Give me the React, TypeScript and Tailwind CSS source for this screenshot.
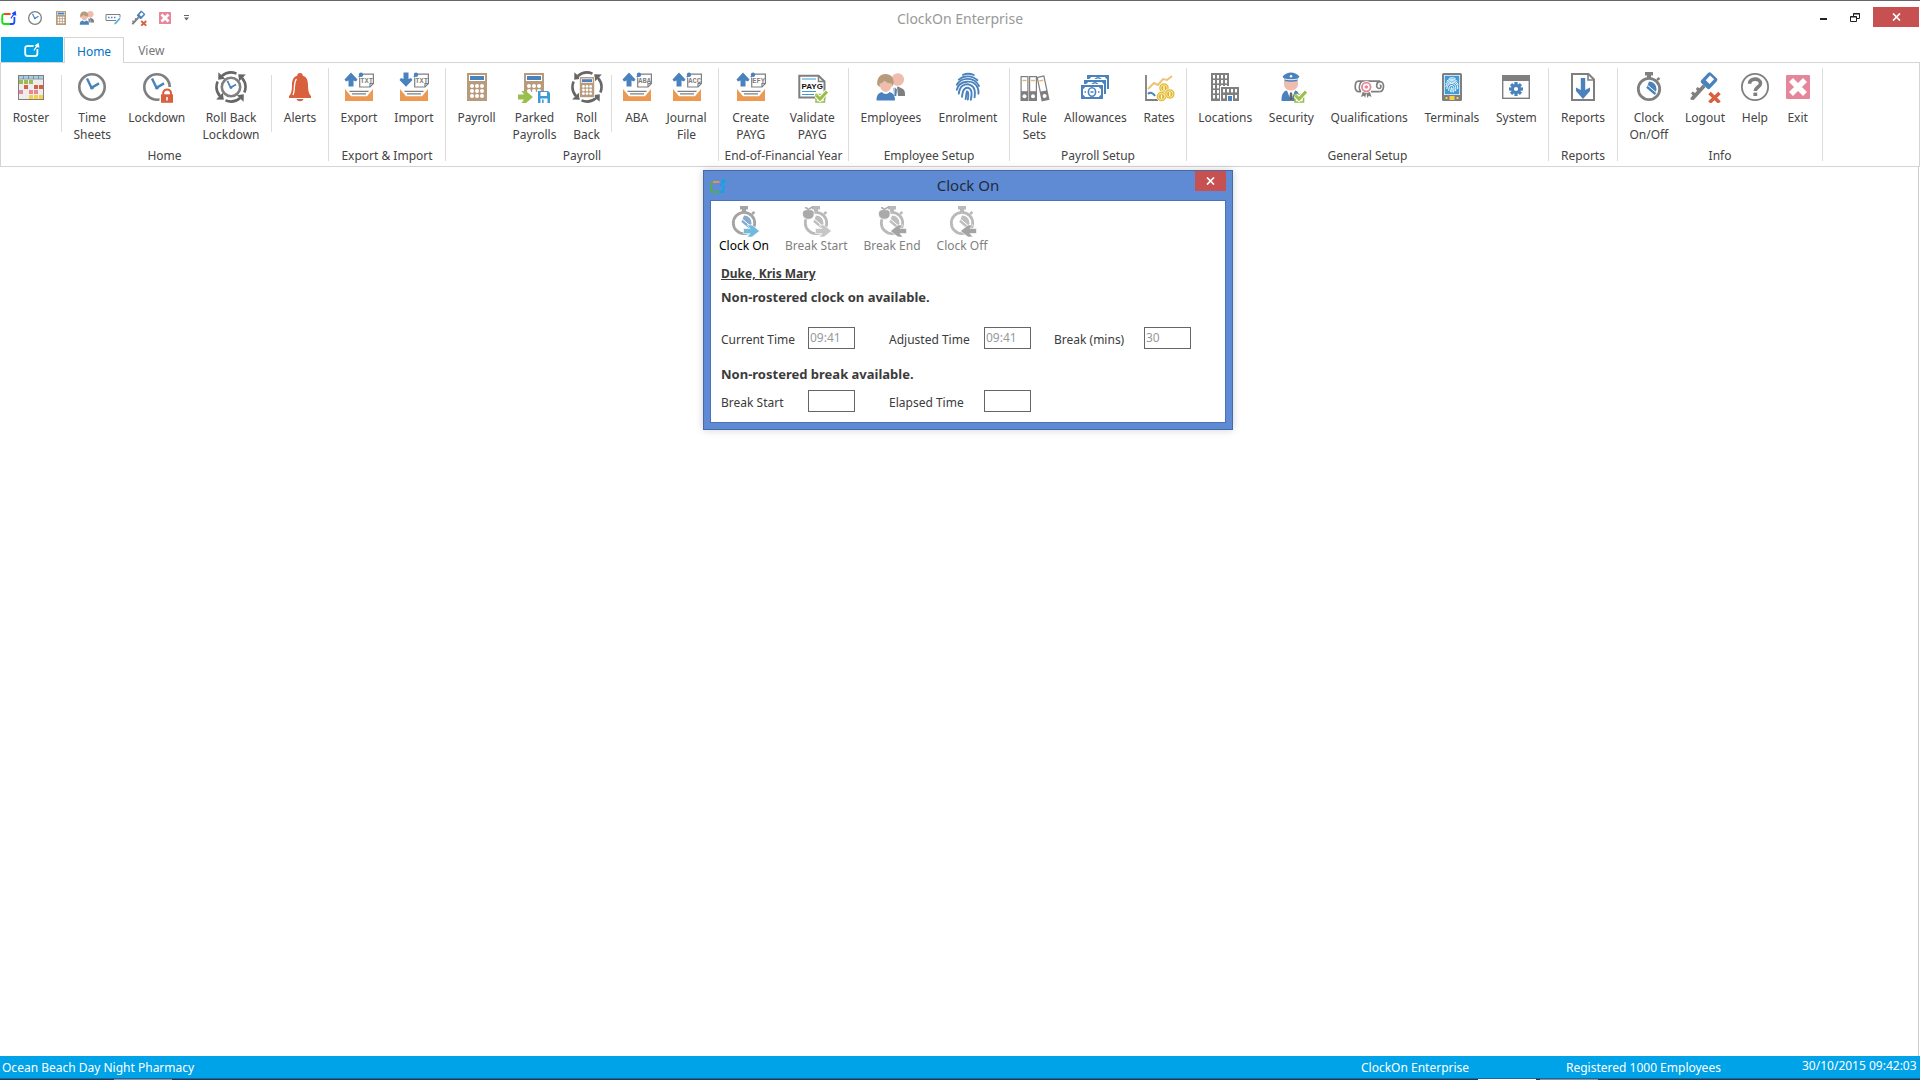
import { Fragment, useState } from "react";
import type { ReactNode } from "react";

const GRAY = "#7f7f7f";
const DARK = "#666666";
const BLUE = "#4a82bd";
const RED = "#d9603f";
const TAN = "#b89a7d";
const GREEN = "#9bbf4d";
const ORANGE = "#ec9a53";
const SKIN = "#efbdae";
const PINK = "#e6869a";

type RibbonItem = {
  label: string;
  icon: ReactNode;
  divider?: boolean;
};

type RibbonGroup = {
  title: string;
  width: string;
  items: RibbonItem[];
};

function Icon({ children, size = 32 }: { children: ReactNode; size?: number }) {
  return (
    <svg width={size} height={size} viewBox="0 0 32 32" fill="none" className="shrink-0" aria-hidden="true">
      {children}
    </svg>
  );
}

/* Shared pieces */

function ClockFace({ cx = 16, r = 12.7 }: { cx?: number; r?: number }) {
  const k = r / 12.7;
  return (
    <g transform={`translate(${cx} 16)`}>
      <circle r={r} fill="#fff" stroke={GRAY} strokeWidth={2.6} />
      <path
        d="M-5 -8.5L-0.5 0.8L7 -3.6"
        transform={`scale(${k})`}
        stroke={BLUE}
        strokeWidth={2.4}
      />
      <circle r={1.9 * k} cy={0.6} fill={BLUE} />
    </g>
  );
}

function CycleArrows() {
  return (
    <g>
      {[0, 90, 180, 270].map((deg) => (
        <g key={deg} transform={`rotate(${deg} 16 16)`}>
          <path d="M29.4 21.5A14.5 14.5 0 0 0 27 6.8" stroke={DARK} strokeWidth={2.6} />
          <path d="M23.2 3.2L30.8 3.4L24.2 10.2Z" fill={DARK} />
        </g>
      ))}
    </g>
  );
}

function CalculatorBody() {
  return (
    <g>
      <rect x="6" y="2" width="20" height="28" fill={TAN} />
      <rect x="8" y="4" width="16" height="6" fill="#fff" />
      <rect x="9" y="5" width="14" height="4" fill={BLUE} />
      {[15, 20, 25].map((y) =>
        [11, 16, 21].map((x) => <circle key={`${x}-${y}`} cx={x} cy={y} r="2" fill="#fff" />)
      )}
    </g>
  );
}

function CheckBadge() {
  return (
    <g>
      <path d="M20 23.5H28.5V31H20Z" fill="#fff" stroke={GREEN} strokeWidth="1.6" />
      <path d="M20.5 24.5L24 28L31 20.5" stroke="#fff" strokeWidth="5" />
      <path d="M20.5 24.5L24 28L31 20.5" stroke={GREEN} strokeWidth="3" />
    </g>
  );
}

function TrayIcon({ text, down = false }: { text: string; down?: boolean }) {
  return (
    <Icon>
      {down ? (
        <path d="M5.5 1.5H10.5V8L13 7L14.5 9L8 15.8L1.5 9L3 7L5.5 8Z" fill={BLUE} />
      ) : (
        <path d="M8 1.5L14.5 8.5L13 10.5L10.5 9.5V15.5H5.5V9.5L3 10.5L1.5 8.5Z" fill={BLUE} />
      )}
      <path d="M20 3.2H30.4V12.5L27 16H16.7V7" stroke={GRAY} strokeWidth="1.2" />
      <path d="M27 16V12.5H30.4" stroke={GRAY} strokeWidth="1.2" />
      <circle cx="18" cy="3.7" r="2.2" fill={BLUE} />
      <path d="M15.8 6.2L18 4" stroke={BLUE} strokeWidth="1.4" />
      <text x="23.6" y="12" textAnchor="middle" fontSize="7" fontFamily="Liberation Mono, monospace" fontWeight="700" fill={GRAY}>
        {text}
      </text>
      <path d="M2 18L8 25.2H24L30 18V30H2Z" fill={ORANGE} />
      <path d="M6.5 20.3H25.5M9 22.8H23" stroke={GRAY} strokeWidth="1.2" />
    </Icon>
  );
}

/* Ribbon icons */

function RosterIcon() {
  const cells: [number, number, string][] = [
    [4, 9, "#9bbb59"], [9, 9, "#9bbb59"], [14, 9, "#9bbb59"],
    [9, 14, RED], [19, 14, RED], [24, 14, RED],
    [4, 19, PINK], [14, 19, PINK], [19, 19, PINK],
    [14, 24, "#fbcf45"], [19, 24, "#fbcf45"], [24, 24, "#fbcf45"],
  ];
  return (
    <Icon>
      <rect x="3.5" y="4.5" width="25" height="24" fill="#ededed" stroke={GRAY} />
      <rect x="4" y="5" width="24" height="2.6" fill="#9fd0ee" />
      <path d="M3 8H29M8.5 5V8M13.5 5V8M18.5 5V8M23.5 5V8" stroke={GRAY} strokeWidth="0.8" />
      {cells.map(([x, y, color]) => (
        <rect key={`${x}-${y}`} x={x} y={y} width="4" height="4" fill={color} />
      ))}
    </Icon>
  );
}

function ClockIcon({ size }: { size?: number }) {
  return (
    <Icon size={size}>
      <ClockFace />
    </Icon>
  );
}

function LockdownIcon() {
  return (
    <Icon>
      <ClockFace />
      <path d="M18.5 32V20L23 16H32V32Z" fill="#fff" />
      <path d="M22.2 24V21.5A4 4 0 0 1 30 21.5V24" stroke={RED} strokeWidth="2" />
      <rect x="20" y="23.3" width="12" height="8.5" fill={RED} />
      <path d="M26 26V29.5" stroke="#fff" strokeWidth="1.6" />
    </Icon>
  );
}

function RollBackLockdownIcon() {
  return (
    <Icon>
      <CycleArrows />
      <ClockFace r={9.2} />
    </Icon>
  );
}

function BellIcon() {
  return (
    <Icon>
      <path d="M16 2C17.8 2 18.8 3 18.8 4.8C22.8 6 24 9.5 24 14C24 20 25 23 27 25V27H5V25C7 23 8 20 8 14C8 9.5 9.2 6 13.2 4.8C13.2 3 14.2 2 16 2Z" fill={RED} />
      <path d="M12.5 8C10.5 10 10.5 14 10.3 18C10.2 20 9.8 22 9 24" stroke="#fff" strokeWidth="1.3" />
      <path d="M12.5 28H19.5C19 29.6 17.6 30.2 16 30.2C14.4 30.2 13 29.6 12.5 28Z" fill={RED} />
    </Icon>
  );
}

function CalculatorIcon({ size }: { size?: number }) {
  return (
    <Icon size={size}>
      <CalculatorBody />
    </Icon>
  );
}

function ParkedPayrollsIcon() {
  return (
    <Icon>
      <CalculatorBody />
      <rect x="5" y="21" width="23" height="11" fill="#fff" />
      <path d="M0 23.5H6L3.5 20H8L15 26L8 32H3.5L6 28.5H0Z" fill={GREEN} />
      <path d="M20 20H30L32 22V32H20Z" fill="#3d9bd6" />
      <rect x="22.5" y="21" width="6.5" height="4" fill="#fff" />
      <rect x="22.5" y="27.5" width="7" height="4.5" fill="#fff" />
      <rect x="24" y="28.5" width="1.6" height="3.5" fill="#3d9bd6" />
    </Icon>
  );
}

function RollBackIcon() {
  return (
    <Icon>
      <CycleArrows />
      <rect x="8" y="6" width="16" height="20.5" fill="#fff" />
      <g transform="translate(4.5 4.6) scale(0.72)">
        <CalculatorBody />
      </g>
    </Icon>
  );
}

function ValidateIcon() {
  return (
    <Icon>
      <path d="M3.3 4.7H22.5L28.5 10.5V26.5H3.3Z" fill="#fff" stroke={GRAY} strokeWidth="2" />
      <path d="M22.5 4.7V10.5H28.5" stroke={GRAY} strokeWidth="1.5" />
      <path d="M6 8H20M6 20.5H20M6 23.5H18" stroke="#3d9bd6" strokeWidth="1.1" />
      <text x="16.2" y="18" textAnchor="middle" fontSize="8" fontFamily="Liberation Sans, sans-serif" fontWeight="700" fill="#111">
        PAYG
      </text>
      <CheckBadge />
    </Icon>
  );
}

function EmployeesIcon({ size }: { size?: number }) {
  return (
    <Icon size={size}>
      <circle cx="22.8" cy="8.5" r="6.3" fill={SKIN} />
      <path d="M18.5 17L23 15.5L28 18C30 19.5 30 22 30 25H19Z" fill={GRAY} />
      <path d="M19.5 16L22 15.5L23 25H19.5Z" fill="#fff" />
      <path d="M20.3 16.5L22 18.5L21.3 25H19.6Z" fill={BLUE} />
      <path d="M4.5 12.5C4.5 9 7 7 10.5 7S17 9 17 12.5C17 17 14 21 10.8 21S4.5 17 4.5 12.5Z" fill={SKIN} />
      <path d="M2.3 14C1.5 7 5 3 10.5 3S19 6.5 18.6 13L16.8 16V12.5C13.5 12.5 11 11.5 9.5 9.5C8.5 11.3 6.5 12.3 4.8 12.5V16Z" fill={TAN} />
      <path d="M7 21C8.5 23.5 13 23.5 14.5 21C18 22 20 24 20 29.5H1.5C1.5 24 3.5 22 7 21Z" fill={BLUE} />
    </Icon>
  );
}

function Fingerprint({ color, width = 1.9 }: { color: string; width?: number }) {
  return (
    <g stroke={color} strokeWidth={width} strokeLinecap="round">
      <path d="M11 3.8C14.5 2.3 18.5 2.5 21.8 4" />
      <path d="M6.8 8.6C12 4 20.5 4.4 25.4 9.2" />
      <path d="M4.8 13.8C9.5 5.8 22.5 5.6 27 15" />
      <path d="M4.8 18.8C7 9 22 7.6 25.8 17.2C26.4 18.8 26.6 20.6 26.4 22.6" />
      <path d="M6.8 22.6C7.2 19.5 8 16.5 10.6 14.8C15.5 11.6 21.5 14 22.6 19C23.1 21.2 23 23.8 22.6 26.4" />
      <path d="M10 25.8C10.6 22.5 10.4 18.2 14 17C17 16.1 19.2 18.4 19.5 21C19.8 23.6 19.4 26.2 18.8 28.8" />
      <path d="M13.6 28C14.4 25.4 13.9 22.8 15 20.4C16.7 20.6 16.4 25 15.8 28.6" />
    </g>
  );
}

function EnrolmentIcon() {
  return (
    <Icon>
      <Fingerprint color={BLUE} />
    </Icon>
  );
}

function BindersIcon() {
  const binder = (
    <g>
      <rect width="8" height="25" fill={GRAY} />
      <rect x="1.2" y="1.2" width="5.6" height="14" fill="#fff" />
      <path d="M2 4.5H6" stroke="#e9b36b" strokeWidth="1.4" />
      <circle cx="4" cy="20.3" r="2" fill="#fff" />
    </g>
  );
  return (
    <Icon>
      <g transform="translate(2.5 5)">{binder}</g>
      <g transform="translate(11 5)">{binder}</g>
      <g transform="translate(18.5 6) rotate(-12)">{binder}</g>
    </Icon>
  );
}

function AllowancesIcon() {
  return (
    <Icon>
      {[[8, 4], [5, 9], [2, 14]].map(([x, y]) => (
        <g key={x} transform={`translate(${x} ${y})`}>
          <rect x="-1" y="-1" width="24" height="16" fill="#fff" />
          <rect width="22" height="14" fill={BLUE} />
          <path d="M4 2H18A2.5 2.5 0 0 0 20 4V10A2.5 2.5 0 0 0 18 12H4A2.5 2.5 0 0 0 2 10V4A2.5 2.5 0 0 0 4 2Z" fill="#fff" />
          <ellipse cx="11" cy="7" rx="3.6" ry="4.2" stroke={BLUE} strokeWidth="1.6" />
          <path d="M9.5 7H12.5M3.5 7H5M17 7H18.5" stroke={BLUE} strokeWidth="1.4" />
        </g>
      ))}
    </Icon>
  );
}

function RatesIcon() {
  return (
    <Icon>
      <path d="M3 4V29H15" stroke={GRAY} strokeWidth="1.8" />
      <path d="M5 18L11 12L15 14L20 8L24 9L29 5" stroke="#efc27a" strokeWidth="2" />
      <path d="M5 23C7 21 10 21.5 12 25" stroke={BLUE} strokeWidth="2" />
      {[[21, 17], [18.5, 25.5], [26.8, 23]].map(([x, y]) => (
        <g key={x}>
          <circle cx={x} cy={y} r="5" fill="#dfb327" stroke="#fff" strokeWidth="0.6" />
          <circle cx={x} cy={y} r="3.2" stroke="#fff2b4" strokeWidth="0.9" />
          <path d={`M${x} ${y - 2}V${y + 2}`} stroke="#fff" strokeWidth="1.3" />
        </g>
      ))}
    </Icon>
  );
}

function LocationsIcon() {
  return (
    <Icon>
      <rect x="2" y="2" width="18" height="28" fill={GRAY} />
      {[4, 9, 14, 19, 24].map((y) =>
        [4, 8, 12, 16].map((x) => <rect key={`${x}-${y}`} x={x} y={y} width="2" height="3.4" fill="#fff" />)
      )}
      <rect x="11" y="15" width="20" height="16" fill="#fff" />
      <rect x="12" y="16" width="18" height="14" fill={GRAY} />
      {[14, 18, 22, 26].map((x) => (
        <rect key={x} x={x} y="18" width="2" height="3.4" fill="#fff" />
      ))}
      <rect x="14" y="24" width="2" height="3.4" fill="#fff" />
      <rect x="26" y="24" width="2" height="3.4" fill="#fff" />
      <rect x="18" y="24" width="6" height="6" fill="#fff" />
      <rect x="19" y="25" width="4" height="5" fill={BLUE} />
    </Icon>
  );
}

function SecurityIcon() {
  return (
    <Icon>
      <path d="M9 10H23V13C23 17 20 19.5 16 19.5S9 17 9 13Z" fill={SKIN} />
      <path d="M7.5 5.5C10 2.8 13 1.5 16 1.5S22 2.8 24.5 5.5L22.5 8V10C18 11 14 11 9.5 10V8Z" fill={BLUE} />
      <path d="M9.5 8C14 9 18 9 22.5 8" stroke="#fff" strokeWidth="0.9" />
      <circle cx="16" cy="5.2" r="1.2" fill="#fff" />
      <path d="M11.5 19.5L16 22L20.5 19.5C23.5 20.5 24.5 23 24.5 30H6.5C6.5 23 8.5 20.5 11.5 19.5Z" fill={BLUE} />
      <path d="M12 19.5L16 30L20 19.5L16 21Z" fill="#fff" />
      <path d="M15 21.5H17L17.8 28L16 30L14.2 28Z" fill={DARK} />
      <CheckBadge />
    </Icon>
  );
}

function QualificationsIcon() {
  return (
    <Icon>
      <path d="M8 10.2H27M8 20.6H5C1.2 20.6 1.2 10.2 5.5 10.2H10M8 20.6C5.5 19 6 12.5 9 10.2M18 20.6H26.5" stroke={GRAY} strokeWidth="1.7" />
      <path d="M26.5 20.6C31.5 20.6 32 10.6 27 10.6C23 10.6 22.5 17.5 26 17.5C28.5 17.5 28.5 14 26.6 14" stroke={GRAY} strokeWidth="1.7" />
      <path d="M10 20L8 26L11 24.7L12.2 27L13.2 22L14.4 27L15.8 24.7L18.6 26L16.5 20Z" fill={GRAY} />
      <circle cx="13.3" cy="16" r="6.1" fill="#fff" />
      <circle cx="13.3" cy="16" r="4.3" stroke={PINK} strokeWidth="1.8" />
      <circle cx="13.3" cy="16" r="1.8" fill={PINK} />
    </Icon>
  );
}

function TerminalsIcon() {
  return (
    <Icon>
      <rect x="6" y="2" width="20" height="28" rx="1.5" fill={GRAY} />
      <rect x="8" y="4" width="16" height="20" fill="#fff" />
      <rect x="8.7" y="4.7" width="14.6" height="18.6" fill="#3d9bd6" />
      <g transform="translate(7.2 5.2) scale(0.55)">
        <Fingerprint color="#fff" width={1.8} />
      </g>
      <rect x="13.5" y="25" width="5" height="4" fill="#fbcf45" />
      <rect x="9.5" y="26" width="2" height="2" fill="#fbcf45" />
      <rect x="20.5" y="26" width="2" height="2" fill="#fbcf45" />
    </Icon>
  );
}

function SystemIcon() {
  return (
    <Icon>
      <rect x="2.7" y="4.7" width="26.6" height="22.6" fill="#fff" stroke={GRAY} strokeWidth="1.4" />
      <rect x="2" y="4" width="28" height="6" fill={GRAY} />
      <g transform="translate(16 18)">
        {[0, 45, 90, 135].map((deg) => (
          <rect key={deg} x="-1.6" y="-7" width="3.2" height="14" fill={BLUE} transform={`rotate(${deg})`} />
        ))}
        <circle r="5" fill={BLUE} />
        <circle r="2.1" fill="#fff" />
      </g>
    </Icon>
  );
}

function ReportsIcon() {
  return (
    <Icon>
      <path d="M5 3H21.5L27 8.5V29H5Z" fill="#fff" stroke={GRAY} strokeWidth="2" />
      <path d="M21 3V9H27" stroke={GRAY} strokeWidth="1.6" />
      <path d="M13.8 7H18.2V19L23 16.5V20L16 28L9 20V16.5L13.8 19Z" fill={BLUE} />
    </Icon>
  );
}

function Stopwatch({ ring = GRAY, hand = BLUE }: { ring?: string; hand?: string }) {
  return (
    <g>
      <path d="M12 1H20V4.5H18V7H14V4.5H12Z" fill={ring} />
      <path d="M24 9L26.5 7" stroke={ring} strokeWidth="2.4" />
      <circle cx="16" cy="18" r="10.7" fill="#fff" stroke={ring} strokeWidth="2.8" />
      <path d="M16 10.5A7.5 7.5 0 0 1 23.5 18.5L22.5 21.5L14.5 14.5Z" fill={hand} />
      <path d="M14 15.8L22.5 23" stroke={hand} strokeWidth="2.6" />
      <path d="M14.8 14.4L23 21.4" stroke="#fff" strokeWidth="1" />
    </g>
  );
}

function StopwatchIcon() {
  return (
    <Icon>
      <Stopwatch />
    </Icon>
  );
}

function KeyIcon({ size }: { size?: number }) {
  return (
    <Icon size={size}>
      <g transform="rotate(43 20 9)">
        <rect x="14.5" y="2.5" width="12" height="14" rx="2" fill={BLUE} />
        <rect x="17.8" y="5" width="5.4" height="6.5" fill="#fff" />
        <path d="M18.6 16.5H22.4V34L20 36L18.6 34.5V31.5L16 31V28.5L18.6 28V25L16.5 24.5V22L18.6 21.5Z" fill={GRAY} />
      </g>
      <path d="M20.5 22L30.5 31.5M30.5 22L20.5 31.5" stroke="#fff" strokeWidth="5.5" />
      <path d="M20.5 22L30.5 31.5M30.5 22L20.5 31.5" stroke={RED} strokeWidth="3.6" />
    </Icon>
  );
}

function HelpIcon() {
  return (
    <Icon>
      <circle cx="16" cy="16" r="13.1" stroke={GRAY} strokeWidth="1.8" />
      <path d="M10.5 12.8C10.5 6.6 21.5 6.6 21.5 12.4C21.5 16 16.3 16 16.3 20" stroke={GRAY} strokeWidth="3.6" />
      <rect x="14.4" y="21.6" width="3.8" height="3.4" fill={GRAY} />
    </Icon>
  );
}

function ExitIcon({ size }: { size?: number }) {
  return (
    <Icon size={size}>
      <rect x="4" y="4" width="24" height="24" rx="1" fill={PINK} />
      <path d="M9 9L23 23M23 9L9 23" stroke="#fff" strokeWidth="5.6" />
    </Icon>
  );
}

function TerminalEditIcon() {
  return (
    <Icon size={16}>
      <path d="M22 21H2V9H30V15" stroke={GRAY} strokeWidth="2" />
      <path d="M6 15H9M12 15H15M18 15H21" stroke={BLUE} strokeWidth="3.4" />
      <path d="M19 26L29 15L31 18L22 28L18 29Z" fill="#5fb0dd" />
    </Icon>
  );
}

function LogoIcon({ colors }: { colors: [string, string, string] }) {
  const [left, top, right] = colors;
  return (
    <svg width="16" height="16" viewBox="0 0 16 16" fill="none" aria-hidden="true">
      <path d="M3 4.2C1.2 4.2 1.2 5 1.2 6.4V11.4C1.2 13.4 1.8 14 3.8 14H9" stroke={left} strokeWidth="1.8" />
      <path d="M3 4H9.6" stroke={top} strokeWidth="1.9" />
      <path d="M9 14H11C12.8 14 13.4 13.2 13.4 11.4V7" stroke={right} strokeWidth="1.8" />
      <path d="M14.6 0.8L15.4 5.6L13 5.2L10.2 8.8L9.4 8L12 4.4L10.6 3.6Z" fill={right} />
    </svg>
  );
}

/* Clock dialog icons */

function DialogClockIcon({ kind, active = false }: { kind: "in" | "out" | "breakIn" | "breakOut"; active?: boolean }) {
  const ring = active ? "#a3a3a3" : "#b9b9b9";
  const onBreak = kind === "breakIn" || kind === "breakOut";
  const forward = kind === "in" || kind === "breakIn";
  const arrow = active ? "#72b9de" : forward ? "#c6c6c6" : "#a3a3a3";
  return (
    <Icon>
      <Stopwatch ring={ring} hand={active ? "#86aad0" : "#bebebe"} />
      {onBreak && (
        <g>
          <path d="M8.5 5C11 4 14.5 5 14.2 9C14 12.5 11.5 14.5 8.5 14.2C5 14.5 2.5 12 2.4 9C2.3 5 6 4 8.5 5Z" fill="#aaaaaa" stroke="#fff" strokeWidth="0.8" />
          <path d="M8.5 6C8.5 4 7 2.6 5 2.8M9 4L13 1.6" stroke="#aaaaaa" strokeWidth="1.6" />
        </g>
      )}
      <path
        d="M15.5 23.5H22L19 20H24L31.5 26L24 32H19L22 28.5H15.5Z"
        transform={forward ? undefined : "translate(46 0) scale(-1 1)"}
        fill={arrow}
        stroke="#fff"
        strokeWidth="0.6"
      />
    </Icon>
  );
}

const ribbon: RibbonGroup[] = [
  {
    title: "Home",
    width: "min-w-[327px]",
    items: [
      { label: "Roster", icon: <RosterIcon />, divider: true },
      { label: "Time\nSheets", icon: <ClockIcon /> },
      { label: "Lockdown", icon: <LockdownIcon /> },
      { label: "Roll Back\nLockdown", icon: <RollBackLockdownIcon />, divider: true },
      { label: "Alerts", icon: <BellIcon /> },
    ],
  },
  {
    title: "Export & Import",
    width: "min-w-[116px]",
    items: [
      { label: "Export", icon: <TrayIcon text="TXT" /> },
      { label: "Import", icon: <TrayIcon text="TXT" down /> },
    ],
  },
  {
    title: "Payroll",
    width: "min-w-[272px]",
    items: [
      { label: "Payroll", icon: <CalculatorIcon /> },
      { label: "Parked\nPayrolls", icon: <ParkedPayrollsIcon /> },
      { label: "Roll\nBack", icon: <RollBackIcon />, divider: true },
      { label: "ABA", icon: <TrayIcon text="ABA" /> },
      { label: "Journal\nFile", icon: <TrayIcon text="ACC" /> },
    ],
  },
  {
    title: "End-of-Financial Year",
    width: "min-w-[129px]",
    items: [
      { label: "Create\nPAYG", icon: <TrayIcon text="EFY" /> },
      { label: "Validate\nPAYG", icon: <ValidateIcon /> },
    ],
  },
  {
    title: "Employee Setup",
    width: "min-w-[160px]",
    items: [
      { label: "Employees", icon: <EmployeesIcon /> },
      { label: "Enrolment", icon: <EnrolmentIcon /> },
    ],
  },
  {
    title: "Payroll Setup",
    width: "min-w-[176px]",
    items: [
      { label: "Rule\nSets", icon: <BindersIcon /> },
      { label: "Allowances", icon: <AllowancesIcon /> },
      { label: "Rates", icon: <RatesIcon /> },
    ],
  },
  {
    title: "General Setup",
    width: "min-w-[361px]",
    items: [
      { label: "Locations", icon: <LocationsIcon /> },
      { label: "Security", icon: <SecurityIcon /> },
      { label: "Qualifications", icon: <QualificationsIcon /> },
      { label: "Terminals", icon: <TerminalsIcon /> },
      { label: "System", icon: <SystemIcon /> },
    ],
  },
  {
    title: "Reports",
    width: "min-w-[68px]",
    items: [{ label: "Reports", icon: <ReportsIcon /> }],
  },
  {
    title: "Info",
    width: "min-w-[204px]",
    items: [
      { label: "Clock\nOn/Off", icon: <StopwatchIcon /> },
      { label: "Logout", icon: <KeyIcon /> },
      { label: "Help", icon: <HelpIcon /> },
      { label: "Exit", icon: <ExitIcon /> },
    ],
  },
];

const quickAccess = [
  { name: "ClockOn", icon: <LogoIcon colors={["#12e012", "#ff3a1a", "#1a4cff"]} /> },
  { name: "Time Sheets", icon: <ClockIcon size={16} /> },
  { name: "Payroll", icon: <CalculatorIcon size={16} /> },
  { name: "Employees", icon: <EmployeesIcon size={16} /> },
  { name: "Terminals", icon: <TerminalEditIcon /> },
  { name: "Logout", icon: <KeyIcon size={16} /> },
  { name: "Exit", icon: <ExitIcon size={16} /> },
];

const clockActions = [
  { label: "Clock On", icon: <DialogClockIcon kind="in" active />, enabled: true },
  { label: "Break Start", icon: <DialogClockIcon kind="breakIn" />, enabled: false },
  { label: "Break End", icon: <DialogClockIcon kind="breakOut" />, enabled: false },
  { label: "Clock Off", icon: <DialogClockIcon kind="out" />, enabled: false },
];

function CloseGlyph() {
  return (
    <svg width="9" height="8" viewBox="0 0 9 8" aria-hidden="true">
      <path d="M1 0.5L8 7.5M8 0.5L1 7.5" stroke="#fff" strokeWidth="1.7" />
    </svg>
  );
}

function TitleBar() {
  return (
    <header className="grid h-9 grid-cols-[1fr_auto_1fr] items-center pb-[2px]">
      <div className="flex items-center gap-[10px] pl-px">
        {quickAccess.map((q) => (
          <button key={q.name} type="button" aria-label={q.name} className="size-4">
            {q.icon}
          </button>
        ))}
        <button type="button" aria-label="Customize toolbar">
          <svg width="7" height="6" viewBox="0 0 7 6" aria-hidden="true">
            <path d="M1 0H6V1H1ZM1 2.5H6L3.5 5.5Z" fill={DARK} />
          </svg>
        </button>
      </div>
      <h1 className="text-[14px] text-[#999999]">ClockOn Enterprise</h1>
      <div className="mt-[6px] flex items-center self-start justify-self-end pr-px">
        <button type="button" aria-label="Minimize" className="flex h-5 w-8 items-center justify-center">
          <span className="mt-1 h-[2px] w-[7px] bg-[#222222]" />
        </button>
        <button type="button" aria-label="Restore" className="mr-[2px] flex h-5 w-8 items-center justify-center">
          <svg width="10" height="9" viewBox="0 0 10 9" fill="none" aria-hidden="true">
            <path d="M3.5 3V0.5H9.5V5.5H7M3 1H10" stroke="#222" />
            <path d="M0.5 3.5H6.5V8.5H0.5ZM0 4H7" stroke="#222" />
          </svg>
        </button>
        <button type="button" aria-label="Close" className="flex h-5 w-[46px] items-center justify-center bg-[#c75050]">
          <CloseGlyph />
        </button>
      </div>
    </header>
  );
}

function Ribbon() {
  return (
    <section className="flex border border-[#d4d4d4] bg-white">
      {ribbon.map((group) => (
        <Fragment key={group.title}>
          <div className={`flex flex-col items-center px-[3px] pt-2 pb-[2px] ${group.width}`}>
            <div className="flex self-stretch">
              {group.items.map((item) => (
                <Fragment key={item.label}>
                  <button type="button" className="flex h-[72px] min-w-[42px] flex-auto flex-col items-center gap-[6px] px-[5px]">
                    {item.icon}
                    <span className="px-[3px] text-center text-[12px] leading-[17px] whitespace-pre">{item.label}</span>
                  </button>
                  {item.divider && <span className="mx-[3px] mt-1 h-[57px] w-px bg-[#dcdcdc]" />}
                </Fragment>
              ))}
            </div>
            <span className="mt-1 text-[12px] leading-[17px] whitespace-nowrap">{group.title}</span>
          </div>
          <span className="my-[5px] w-px bg-[#dcdcdc]" />
        </Fragment>
      ))}
    </section>
  );
}

type TimeFieldProps = {
  id: string;
  label: string;
  value: string;
};

function TimeField({ id, label, value }: TimeFieldProps) {
  return (
    <>
      <label htmlFor={id} className="pt-[2px] whitespace-nowrap">
        {label}
      </label>
      <input
        id={id}
        readOnly
        value={value}
        className="h-[22px] w-[47px] border border-[#666666] bg-white px-px pb-[2px] text-[12px] text-[#999999]"
      />
    </>
  );
}

function ClockOnDialog({ onClose }: { onClose: () => void }) {
  return (
    <div
      role="dialog"
      aria-label="Clock On"
      className="absolute top-[3px] left-[703px] w-[530px] border border-[#4869a5] bg-[#5f8ad4] px-[6px] pb-[6px] shadow-[0_0_8px_rgba(0,0,0,0.18)]"
    >
      <div className="grid h-[29px] grid-cols-[1fr_auto_1fr]">
        <span className="mt-[7px]">
          <LogoIcon colors={["#4fb04a", "#e8935a", "#0aa5e8"]} />
        </span>
        <h2 className="self-center text-[15px] text-[#222b3a]">Clock On</h2>
        <button
          type="button"
          aria-label="Close dialog"
          onClick={onClose}
          className="flex h-5 w-[31px] items-center justify-center justify-self-end bg-[#c75050]"
        >
          <CloseGlyph />
        </button>
      </div>

      <div className="border border-[#4a72b8] bg-white pb-[10px] text-[12px] leading-[17px] text-[#3b3b3b]">
        <div className="flex pt-1">
          {clockActions.map((action) => (
            <button
              key={action.label}
              type="button"
              disabled={!action.enabled}
              className={`flex flex-col items-center px-2 ${action.enabled ? "text-black" : "text-[#808080]"}`}
            >
              {action.icon}
              <span className="whitespace-nowrap">{action.label}</span>
            </button>
          ))}
        </div>

        <div className="px-[10px]">
          <p className="mt-[11px] font-bold underline">Duke, Kris Mary</p>
          <p className="mt-[7px] text-[13px] font-bold">Non-rostered clock on available.</p>
          <div className="mt-[21px] grid grid-cols-[87px_81px_95px_70px_90px_auto] items-center">
            <TimeField id="current-time" label="Current Time" value="09:41" />
            <TimeField id="adjusted-time" label="Adjusted Time" value="09:41" />
            <TimeField id="break-mins" label="Break (mins)" value="30" />
          </div>
          <p className="mt-[17px] text-[13px] font-bold">Non-rostered break available.</p>
          <div className="mt-[7px] grid grid-cols-[87px_81px_95px_70px_90px_auto] items-center">
            <TimeField id="break-start" label="Break Start" value="" />
            <TimeField id="elapsed-time" label="Elapsed Time" value="" />
          </div>
        </div>
      </div>
    </div>
  );
}

function StatusBar() {
  return (
    <footer>
      <div className="flex h-[22px] items-center bg-[#00a2e8] pt-px pl-[2px] text-[12px] whitespace-nowrap text-white">
        <span className="flex-1">Ocean Beach Day Night Pharmacy</span>
        <span className="w-[205px]">ClockOn Enterprise</span>
        <span className="w-[236px]">Registered 1000 Employees</span>
        <span className="w-[118px] pb-1">30/10/2015 09:42:03</span>
      </div>
      {/* top edge of the desktop taskbar */}
      <div className="flex h-[2px] items-end border-t border-[#17699c] bg-[#1b3a58]">
        <span className="ml-[114px] h-px w-[58px] bg-[#8494a6]" />
        <span className="flex-1" />
        <span className="mr-1 h-px w-[58px] bg-white" />
        <span className="mr-[322px] h-px w-[58px] bg-[#8494a6]" />
      </div>
    </footer>
  );
}

export default function App() {
  const [tab, setTab] = useState("Home");
  const [dialogOpen, setDialogOpen] = useState(true);

  return (
    <div className="flex min-h-screen flex-col border-t border-[#666666] bg-white font-['Noto_Sans','Open_Sans',sans-serif] text-[#444444]">
      <TitleBar />

      {/* Tabs */}
      <nav className="relative z-10 -mb-px flex h-[26px] pl-px text-[12px]">
        <button type="button" aria-label="File" className="mb-px flex w-[62px] items-center justify-center bg-[#00a2e8]">
          <LogoIcon colors={["#fff", "#fff", "#fff"]} />
        </button>
        {["Home", "View"].map((name) => (
          <button
            key={name}
            type="button"
            onClick={() => setTab(name)}
            className={
              tab === name
                ? "ml-px border border-b-0 border-[#d4d4d4] bg-white px-3 pt-[2px] text-[#0072c6]"
                : "px-[14px] pt-[2px] text-[#777777]"
            }
          >
            {name}
          </button>
        ))}
      </nav>

      <Ribbon />

      <main className="relative mr-px flex-1 border-r border-[#cccccc]">
        {dialogOpen && <ClockOnDialog onClose={() => setDialogOpen(false)} />}
      </main>

      <StatusBar />
    </div>
  );
}
